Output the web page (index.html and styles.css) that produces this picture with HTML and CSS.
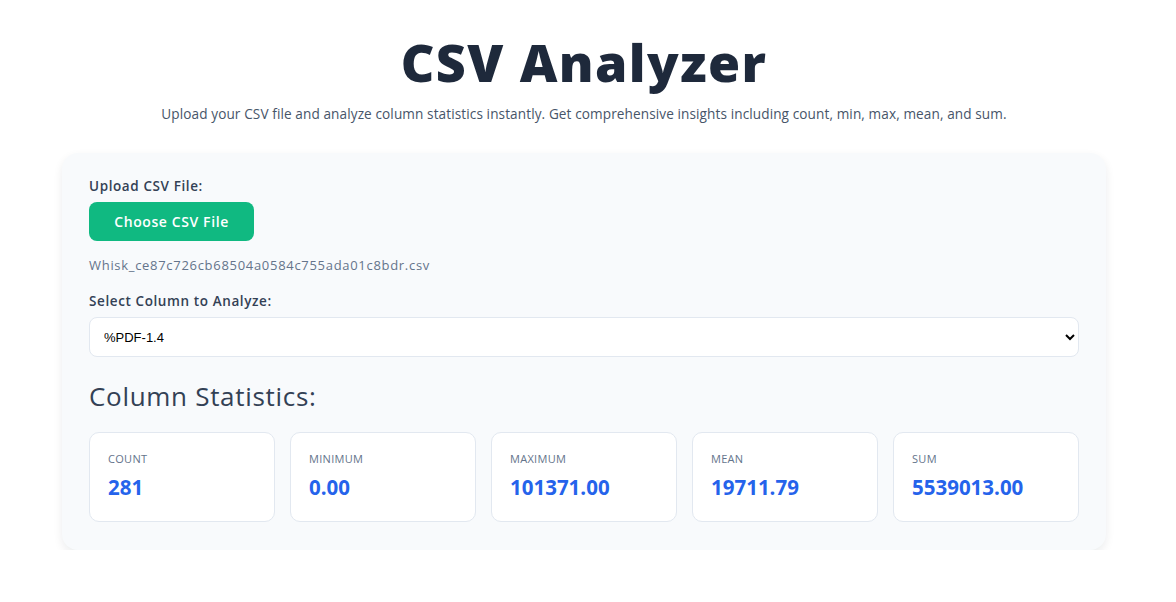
FILE: index.html
```html
<!DOCTYPE html>
<html lang="en">
<head>
<meta charset="utf-8">
<title>CSV Analyzer</title>
<link rel="stylesheet" href="styles.css">
</head>
<body>
<div class="page">
  <header class="header">
    <h1 class="title">CSV Analyzer</h1>
    <p class="subtitle">Upload your CSV file and analyze column statistics instantly. Get comprehensive insights including count, min, max, mean, and sum.</p>
  </header>
  <main class="panel">
    <div class="field">
      <label class="label">Upload CSV File:</label>
      <button class="btn">Choose CSV File</button>
      <div class="filename">Whisk_ce87c726cb68504a0584c755ada01c8bdr.csv</div>
    </div>
    <div class="field">
      <label class="label">Select Column to Analyze:</label>
      <select class="select"><option>%PDF-1.4</option></select>
    </div>
    <h2 class="stats-title">Column Statistics:</h2>
    <div class="stats">
      <div class="card"><div class="card-label">COUNT</div><div class="card-value">281</div></div>
      <div class="card"><div class="card-label">MINIMUM</div><div class="card-value">0.00</div></div>
      <div class="card"><div class="card-label">MAXIMUM</div><div class="card-value">101371.00</div></div>
      <div class="card"><div class="card-label">MEAN</div><div class="card-value">19711.79</div></div>
      <div class="card"><div class="card-label">SUM</div><div class="card-value">5539013.00</div></div>
    </div>
  </main>
</div>
</body>
</html>
```
FILE: styles.css
```css
* { box-sizing: border-box; }
html, body { margin: 0; padding: 0; background: #ffffff; }
body {
  font-family: "Open Sans", "Liberation Sans", sans-serif;
  color: #1e293b;
  padding-right: 8px;
}
.page {
  max-width: 1044px;
  margin: 0 auto;
  padding-top: 26px;
}
.header { text-align: center; }
.title {
  margin: 0;
  font-size: 52px;
  line-height: 72px;
  font-weight: 800;
  color: #1e293b;
  letter-spacing: 1.4px;
}
.subtitle {
  margin: 6px 0 0;
  font-size: 13.6px;
  line-height: 20px;
  color: #475569;
  font-weight: 400;
  letter-spacing: 0.1px;
}
.panel {
  margin-top: 29px;
  background: #f8fafc;
  border-radius: 16px;
  box-shadow: 0 4px 10px rgba(15, 23, 42, 0.08);
  padding: 24px 27px 28px;
}
.field { display: flex; flex-direction: column; align-items: flex-start; }
.label {
  font-size: 13.5px;
  font-weight: 600;
  color: #334155;
  line-height: 18px;
  letter-spacing: 0.6px;
}
.btn {
  margin-top: 7px;
  width: 165px;
  height: 39px;
  border: none;
  border-radius: 8px;
  background: #10b981;
  color: #ffffff;
  font-family: inherit;
  font-size: 14px;
  font-weight: 600;
  letter-spacing: 0.6px;
}
.filename {
  margin-top: 15px;
  font-size: 13px;
  line-height: 18px;
  color: #64748b;
  margin-bottom: 18px;
  letter-spacing: 0.7px;
}
.select {
  margin-top: 7px;
  width: 100%;
  height: 40px;
  border: 1px solid #e2e8f0;
  border-radius: 8px;
  background: #ffffff;
  padding: 0 10px;
  font-family: "Liberation Sans", Arial, sans-serif;
  font-size: 13px;
  color: #000;
}
.stats-title {
  margin: 24px 0 0;
  font-size: 26px;
  line-height: 30px;
  font-weight: 400;
  color: #334155;
  letter-spacing: 0.7px;
}
.stats {
  margin-top: 21px;
  display: grid;
  grid-template-columns: repeat(5, 1fr);
  gap: 15px;
}
.card {
  background: #ffffff;
  border: 1px solid #e2e8f0;
  border-radius: 10px;
  height: 90px;
  padding: 19px 18px;
}
.card-label {
  font-size: 11px;
  line-height: 14px;
  color: #64748b;
  font-weight: 400;
  letter-spacing: 0.3px;
}
.card-value {
  margin-top: 7px;
  font-size: 20.5px;
  line-height: 28px;
  font-weight: 700;
  color: #2563eb;
}
```
